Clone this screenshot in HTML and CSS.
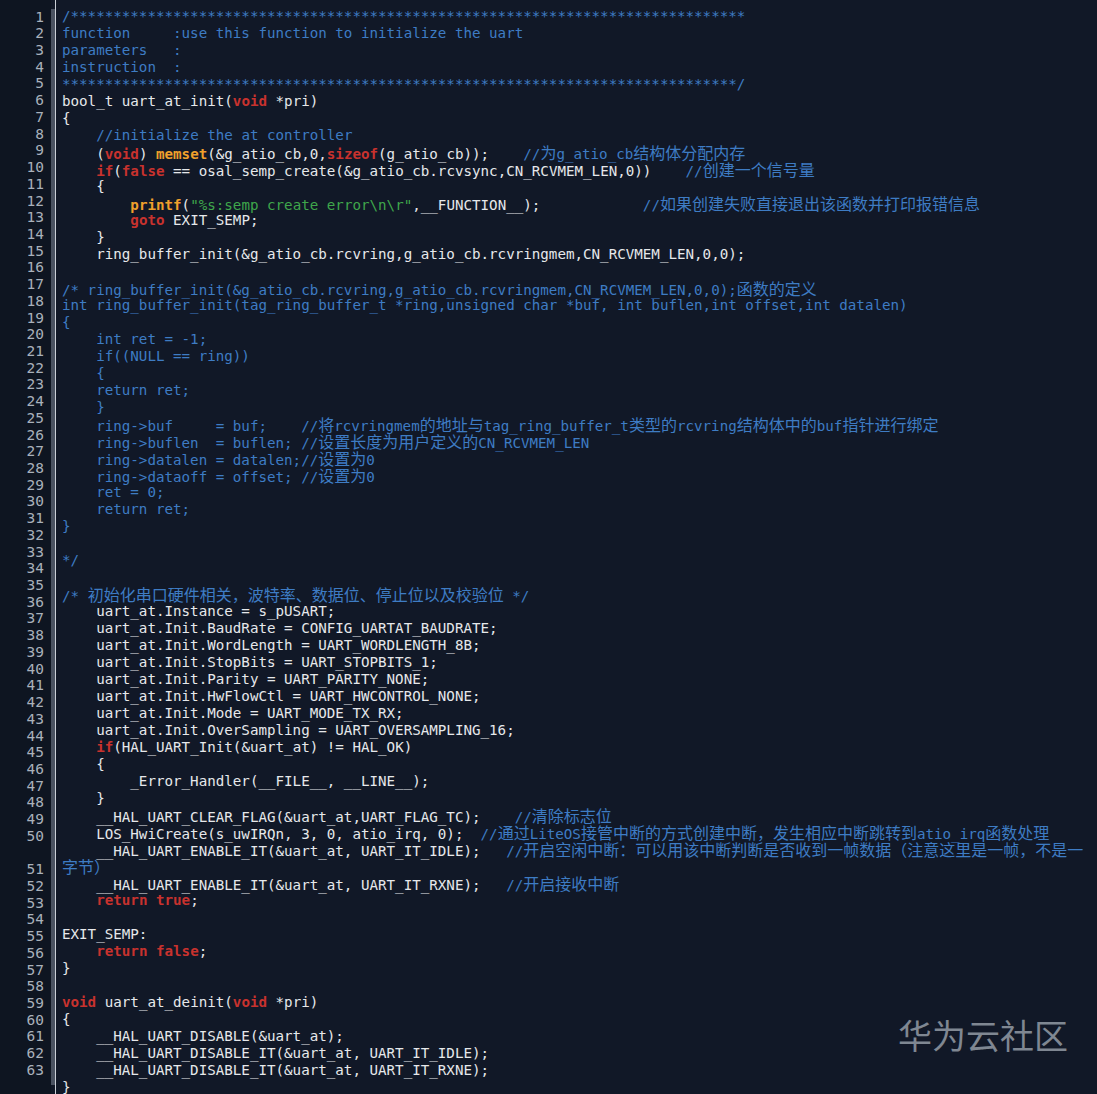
FILE: index.html
```html
<!DOCTYPE html>
<html lang="zh-CN">
<head>
<meta charset="utf-8">
<title>uart_at_init</title>
<link rel="stylesheet" href="styles.css">
</head>
<body>
<div class="editor">
  <div class="gutter">
    <div class="n">1</div><div class="n">2</div><div class="n">3</div><div class="n">4</div><div class="n">5</div>
    <div class="n">6</div><div class="n">7</div><div class="n">8</div><div class="n">9</div><div class="n">10</div>
    <div class="n">11</div><div class="n">12</div><div class="n">13</div><div class="n">14</div><div class="n">15</div>
    <div class="n">16</div><div class="n">17</div><div class="n">18</div><div class="n">19</div><div class="n">20</div>
    <div class="n">21</div><div class="n">22</div><div class="n">23</div><div class="n">24</div><div class="n">25</div>
    <div class="n">26</div><div class="n">27</div><div class="n">28</div><div class="n">29</div><div class="n">30</div>
    <div class="n">31</div><div class="n">32</div><div class="n">33</div><div class="n">34</div><div class="n">35</div>
    <div class="n">36</div><div class="n">37</div><div class="n">38</div><div class="n">39</div><div class="n">40</div>
    <div class="n">41</div><div class="n">42</div><div class="n">43</div><div class="n">44</div><div class="n">45</div>
    <div class="n">46</div><div class="n">47</div><div class="n">48</div><div class="n">49</div><div class="n">50</div>
    <div class="n"></div>
    <div class="n">51</div><div class="n">52</div><div class="n">53</div><div class="n">54</div><div class="n">55</div>
    <div class="n">56</div><div class="n">57</div><div class="n">58</div><div class="n">59</div><div class="n">60</div>
    <div class="n">61</div><div class="n">62</div><div class="n">63</div>
  </div>
  <div class="bar"></div>
  <div class="rule"></div>
  <div class="code">
<div class="ln c">/*******************************************************************************</div>
<div class="ln c">function     :use this function to initialize the uart</div>
<div class="ln c">parameters   :</div>
<div class="ln c">instruction  :</div>
<div class="ln c">*******************************************************************************/</div>
<div class="ln">bool_t uart_at_init(<span class="k">void</span> *pri)</div>
<div class="ln">{</div>
<div class="ln">    <span class="c">//initialize the at controller</span></div>
<div class="ln">    (<span class="k">void</span>) <span class="f">memset</span>(&amp;g_atio_cb,0,<span class="k">sizeof</span>(g_atio_cb));    <span class="c">//<span class="cn">为</span>g_atio_cb<span class="cn">结构体分配内存</span></span></div>
<div class="ln">    <span class="k">if</span>(<span class="k">false</span> == osal_semp_create(&amp;g_atio_cb.rcvsync,CN_RCVMEM_LEN,0))    <span class="c">//<span class="cn">创建一个信号量</span></span></div>
<div class="ln">    {</div>
<div class="ln">        <span class="f">printf</span>(<span class="s">"%s:semp create error\n\r"</span>,__FUNCTION__);            <span class="c">//<span class="cn">如果创建失败直接退出该函数并打印报错信息</span></span></div>
<div class="ln">        <span class="k">goto</span> EXIT_SEMP;</div>
<div class="ln">    }</div>
<div class="ln">    ring_buffer_init(&amp;g_atio_cb.rcvring,g_atio_cb.rcvringmem,CN_RCVMEM_LEN,0,0);</div>
<div class="ln"></div>
<div class="ln c">/* ring_buffer_init(&amp;g_atio_cb.rcvring,g_atio_cb.rcvringmem,CN_RCVMEM_LEN,0,0);<span class="cn">函数的定义</span></div>
<div class="ln c">int ring_buffer_init(tag_ring_buffer_t *ring,unsigned char *buf, int buflen,int offset,int datalen)</div>
<div class="ln c">{</div>
<div class="ln c">    int ret = -1;</div>
<div class="ln c">    if((NULL == ring))</div>
<div class="ln c">    {</div>
<div class="ln c">    return ret;</div>
<div class="ln c">    }</div>
<div class="ln c">    ring-&gt;buf     = buf;    //<span class="cn">将</span>rcvringmem<span class="cn">的地址与</span>tag_ring_buffer_t<span class="cn">类型的</span>rcvring<span class="cn">结构体中的</span>buf<span class="cn">指针进行绑定</span></div>
<div class="ln c">    ring-&gt;buflen  = buflen; //<span class="cn">设置长度为用户定义的</span>CN_RCVMEM_LEN</div>
<div class="ln c">    ring-&gt;datalen = datalen;//<span class="cn">设置为</span>0</div>
<div class="ln c">    ring-&gt;dataoff = offset; //<span class="cn">设置为</span>0</div>
<div class="ln c">    ret = 0;</div>
<div class="ln c">    return ret;</div>
<div class="ln c">}</div>
<div class="ln"></div>
<div class="ln c">*/</div>
<div class="ln"></div>
<div class="ln c">/* <span class="cn">初始化串口硬件相关，波特率、数据位、停止位以及校验位</span> */</div>
<div class="ln">    uart_at.Instance = s_pUSART;</div>
<div class="ln">    uart_at.Init.BaudRate = CONFIG_UARTAT_BAUDRATE;</div>
<div class="ln">    uart_at.Init.WordLength = UART_WORDLENGTH_8B;</div>
<div class="ln">    uart_at.Init.StopBits = UART_STOPBITS_1;</div>
<div class="ln">    uart_at.Init.Parity = UART_PARITY_NONE;</div>
<div class="ln">    uart_at.Init.HwFlowCtl = UART_HWCONTROL_NONE;</div>
<div class="ln">    uart_at.Init.Mode = UART_MODE_TX_RX;</div>
<div class="ln">    uart_at.Init.OverSampling = UART_OVERSAMPLING_16;</div>
<div class="ln">    <span class="k">if</span>(HAL_UART_Init(&amp;uart_at) != HAL_OK)</div>
<div class="ln">    {</div>
<div class="ln">        _Error_Handler(__FILE__, __LINE__);</div>
<div class="ln">    }</div>
<div class="ln">    __HAL_UART_CLEAR_FLAG(&amp;uart_at,UART_FLAG_TC);    <span class="c">//<span class="cn">清除标志位</span></span></div>
<div class="ln">    LOS_HwiCreate(s_uwIRQn, 3, 0, atio_irq, 0);  <span class="c">//<span class="cn">通过</span>LiteOS<span class="cn">接管中断的方式创建中断，发生相应中断跳转到</span>atio_irq<span class="cn">函数处理</span></span></div>
<div class="ln">    __HAL_UART_ENABLE_IT(&amp;uart_at, UART_IT_IDLE);   <span class="c">//<span class="cn">开启空闲中断：可以用该中断判断是否收到一帧数据（注意这里是一帧，不是一</span></span></div>
<div class="ln c"><span class="cn">字节）</span></div>
<div class="ln">    __HAL_UART_ENABLE_IT(&amp;uart_at, UART_IT_RXNE);   <span class="c">//<span class="cn">开启接收中断</span></span></div>
<div class="ln">    <span class="k">return</span> <span class="k">true</span>;</div>
<div class="ln"></div>
<div class="ln">EXIT_SEMP:</div>
<div class="ln">    <span class="k">return</span> <span class="k">false</span>;</div>
<div class="ln">}</div>
<div class="ln"></div>
<div class="ln"><span class="k">void</span> uart_at_deinit(<span class="k">void</span> *pri)</div>
<div class="ln">{</div>
<div class="ln">    __HAL_UART_DISABLE(&amp;uart_at);</div>
<div class="ln">    __HAL_UART_DISABLE_IT(&amp;uart_at, UART_IT_IDLE);</div>
<div class="ln">    __HAL_UART_DISABLE_IT(&amp;uart_at, UART_IT_RXNE);</div>
<div class="ln">}</div>
  </div>
</div>
<div class="watermark">华为云社区</div>
</body>
</html>
```
FILE: styles.css
```css
html, body {
  margin: 0;
  padding: 0;
  height: 100%;
  overflow: hidden;
  background: #111827;
}

.editor {
  display: flex;
  align-items: stretch;
  min-height: 1094px;
  background: #111827;
}

.gutter {
  width: 51px;
  box-sizing: border-box;
  padding: 8.6px 7px 0 0;
  background: #0e1521;
  font-family: "DejaVu Sans Mono", "Liberation Mono", monospace;
  font-size: 14.5px;
  color: #a9b1bb;
  text-align: right;
}

.gutter .n {
  height: 16.73px;
  line-height: 16.73px;
}

.bar {
  width: 4px;
  margin: 9px 0 11px;
  background: #4a5261;
}

.rule {
  width: 1px;
  background: #c9ced6;
}

.code {
  flex: 1;
  padding: 8px 0 0 6px;
  font-family: "DejaVu Sans Mono", "Liberation Mono", monospace;
  font-size: 14.2px;
  color: #e6e8eb;
}

.ln {
  height: 17px;
  line-height: 17px;
  white-space: pre;
}

.c { color: #3e7cc4; }
.k { color: #c8322e; font-weight: bold; }
.f { color: #f0a02c; font-weight: bold; }
.s { color: #3fa64b; }

.cn {
  font-family: "Noto Sans CJK SC", sans-serif;
  font-size: 16px;
  line-height: 1;
}

.watermark {
  position: absolute;
  right: 29px;
  top: 1018px;
  font-family: "Noto Sans CJK SC", sans-serif;
  font-size: 34px;
  line-height: 1;
  color: #7f8792;
}
```
